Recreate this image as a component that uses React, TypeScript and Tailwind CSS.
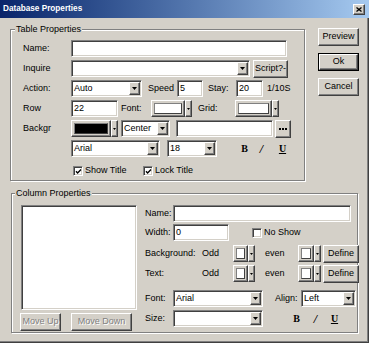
import React from 'react';

const SUNKEN =
  'border border-t-[#808080] border-l-[#808080] border-b-white border-r-white shadow-[inset_1px_1px_0_#404040,inset_-1px_-1px_0_#d4d0c8]';
const RAISED =
  'border border-t-white border-l-white border-b-[#404040] border-r-[#404040] shadow-[inset_-1px_-1px_0_#808080]';
const ETCHED = 'border border-[#808080] shadow-[inset_1px_1px_0_#fff,1px_1px_0_#fff]';

function Arrow() {
  return (
    <svg width="5" height="3" viewBox="0 0 5 3">
      <path d="M0 0h5L2.5 3z" fill="#000" />
    </svg>
  );
}

function Input({ w, value = '' }: { w: string; value?: string }) {
  return (
    <div className={`${w} h-[17px] shrink-0 bg-white ${SUNKEN} px-[2px] leading-[14px] whitespace-nowrap overflow-hidden`}>
      {value}
    </div>
  );
}

function Select({ w, value = '' }: { w: string; value?: string }) {
  return (
    <div className={`${w} h-[17px] shrink-0 bg-white ${SUNKEN} flex p-[1px]`}>
      <span className="flex-1 px-[1px] leading-[13px] whitespace-nowrap overflow-hidden">{value}</span>
      <span className={`w-[11px] bg-[#d4d0c8] ${RAISED} flex items-center justify-center`}>
        <Arrow />
      </span>
    </div>
  );
}

function ColorCombo({ w, color = 'bg-white' }: { w: string; color?: string }) {
  return (
    <div className={`${w} h-[17px] shrink-0 flex`}>
      <div className={`flex-1 ${RAISED} p-[2px]`}>
        <div className={`h-full ${color} border border-t-[#808080] border-l-[#808080] border-b-[#404040] border-r-[#404040]`} />
      </div>
      <div className={`w-[7px] ${RAISED} flex items-center justify-center`}>
        <svg width="3" height="2" viewBox="0 0 3 2">
          <path d="M0 0h3L1.5 2z" fill="#000" />
        </svg>
      </div>
    </div>
  );
}

function Btn({
  w,
  children,
  disabled = false,
  isDefault = false,
}: {
  w: string;
  children: React.ReactNode;
  disabled?: boolean;
  isDefault?: boolean;
}) {
  const inner = (
    <div
      className={`h-full ${RAISED} flex items-center justify-center whitespace-nowrap ${
        disabled ? 'text-[#808080] [text-shadow:1px_1px_0_#fff]' : ''
      }`}
    >
      {children}
    </div>
  );
  if (isDefault) {
    return <div className={`${w} h-[18px] shrink-0 border border-black`}>{inner}</div>;
  }
  return <div className={`${w} h-[18px] shrink-0`}>{inner}</div>;
}

function Check({ checked = false }: { checked?: boolean }) {
  return (
    <div className={`w-[10px] h-[10px] shrink-0 bg-white ${SUNKEN} flex items-center justify-center`}>
      {checked && (
        <svg width="7" height="7" viewBox="0 0 7 7">
          <path d="M1 3.2l1.6 1.7L6 1.5" fill="none" stroke="#000" strokeWidth="1.4" />
        </svg>
      )}
    </div>
  );
}

// bold / italic / underline toggles
function Biu({ gap1, gap2 }: { gap1: string; gap2: string }) {
  return (
    <>
      <span className="w-[9px] text-center font-['Liberation_Serif',serif] font-bold text-[10px]">B</span>
      <span className={`w-[9px] ${gap1} text-center font-['Liberation_Serif',serif] font-black italic text-[12px] leading-[10px]`}>/</span>
      <span className={`w-[9px] ${gap2} text-center font-['Liberation_Serif',serif] font-bold text-[10px] underline`}>U</span>
    </>
  );
}

export default function App() {
  return (
    <div className="w-[369px] h-[343px] overflow-hidden bg-[#d4d0c8] text-black text-[9px] font-['Liberation_Sans',Arial,sans-serif] shadow-[inset_-1px_-1px_0_#404040,inset_-2px_-2px_0_#808080]">
      {/* Title bar */}
      <div className="h-[18px] flex items-center justify-between pl-[3px] pr-[4px] bg-linear-to-r from-[#0a246a] to-[#a6caf0]">
        <span className="text-white font-bold text-[8.2px]">Database Properties</span>
        <div className={`w-[12px] h-[11px] bg-[#d4d0c8] ${RAISED} flex items-center justify-center`}>
          <svg width="6" height="5" viewBox="0 0 6 5">
            <path d="M0.5 0.5l5 4M5.5 0.5l-5 4" stroke="#000" strokeWidth="1.3" />
          </svg>
        </div>
      </div>

      <div className="flex">
        {/* Table Properties */}
        <div className={`relative ml-[10px] mt-[11px] w-[295px] h-[152px] ${ETCHED}`}>
          <span className="absolute -top-[7px] left-[4px] px-[1px] bg-[#d4d0c8] leading-[12px]">Table Properties</span>
          <div className="flex flex-col gap-[3px] pt-[10px] pl-[12px]">
            <div className="flex items-center h-[17px]">
              <span className="w-[48px]">Name:</span>
              <Input w="w-[216px]" />
            </div>
            <div className="flex items-center h-[17px]">
              <span className="w-[48px]">Inquire</span>
              <Select w="w-[179px]" />
              <div className="ml-[3px]">
                <Btn w="w-[35px]">Script?-</Btn>
              </div>
            </div>
            <div className="flex items-center h-[17px]">
              <span className="w-[48px]">Action:</span>
              <Select w="w-[71px]" value="Auto" />
              <span className="ml-[6px] w-[29px]">Speed</span>
              <Input w="w-[26px]" value="5" />
              <span className="ml-[5px] w-[28px]">Stay:</span>
              <Input w="w-[27px]" value="20" />
              <span className="ml-[4px]">1/10S</span>
            </div>
            <div className="flex items-center h-[17px]">
              <span className="w-[48px]">Row</span>
              <Input w="w-[47px]" value="22" />
              <span className="ml-[3px] w-[30px]">Font:</span>
              <ColorCombo w="w-[41px]" />
              <span className="ml-[6px] w-[37px]">Grid:</span>
              <ColorCombo w="w-[44px]" />
            </div>
            <div className="flex items-center h-[17px]">
              <span className="w-[48px] whitespace-nowrap">Backgr</span>
              <ColorCombo w="w-[47px]" color="bg-black" />
              <div className="ml-[3px]">
                <Select w="w-[49px]" value="Center" />
              </div>
              <div className="ml-[6px]">
                <Input w="w-[97px]" />
              </div>
              <div className={`ml-[2px] w-[16px] h-[18px] ${RAISED} flex items-center justify-center gap-[1px]`}>
                <span className="w-[2px] h-[2px] bg-black" />
                <span className="w-[2px] h-[2px] bg-black" />
                <span className="w-[2px] h-[2px] bg-black" />
              </div>
            </div>
            <div className="flex items-center h-[17px]">
              <span className="w-[48px]" />
              <Select w="w-[89px]" value="Arial" />
              <div className="ml-[7px]">
                <Select w="w-[50px]" value="18" />
              </div>
              <span className="ml-[23px] flex items-center">
                <Biu gap1="ml-[8px]" gap2="ml-[12px]" />
              </span>
            </div>
            <div className="flex items-center h-[10px] mt-[6px] pl-[50px]">
              <Check checked />
              <span className="ml-[2px] w-[58px]">Show Title</span>
              <Check checked />
              <span className="ml-[2px]">Lock Title</span>
            </div>
          </div>
        </div>

        {/* Dialog buttons */}
        <div className="ml-[13px] mt-[10px] flex flex-col gap-[7px]">
          <Btn w="w-[41px]">Preview</Btn>
          <Btn w="w-[41px]" isDefault>
            Ok
          </Btn>
          <Btn w="w-[41px]">Cancel</Btn>
        </div>
      </div>

      {/* Column Properties */}
      <div className={`relative ml-[11px] mt-[12px] w-[347px] h-[140px] ${ETCHED}`}>
        <span className="absolute -top-[7px] left-[3px] px-[1px] bg-[#d4d0c8] leading-[12px]">Column Properties</span>
        <div className="flex pt-[11px] pl-[8px]">
          <div className="flex flex-col">
            <div className={`ml-[1px] w-[116px] h-[105px] bg-white ${SUNKEN}`} />
            <div className="flex mt-[3px]">
              <Btn w="w-[41px]" disabled>
                Move Up
              </Btn>
              <div className="ml-[10px]">
                <Btn w="w-[61px]" disabled>
                  Move Down
                </Btn>
              </div>
            </div>
          </div>

          <div className="ml-[8px] flex flex-col">
            <div className="flex items-center h-[17px]">
              <span className="w-[28px]">Name:</span>
              <Input w="w-[178px]" />
            </div>
            <div className="flex items-center h-[17px] mt-[2px]">
              <span className="w-[28px]">Width:</span>
              <Input w="w-[56px]" value="0" />
              <span className="ml-[23px]">
                <Check />
              </span>
              <span className="ml-[2px]">No Show</span>
            </div>
            <div className="flex items-center h-[17px] mt-[4px]">
              <span className="w-[57px]">Background:</span>
              <span className="w-[31px]">Odd</span>
              <ColorCombo w="w-[22px]" />
              <span className="ml-[10px] w-[33px]">even</span>
              <ColorCombo w="w-[23px]" />
              <div className="ml-[2px]">
                <Btn w="w-[36px]">Define</Btn>
              </div>
            </div>
            <div className="flex items-center h-[17px] mt-[3px]">
              <span className="w-[57px]">Text:</span>
              <span className="w-[31px]">Odd</span>
              <ColorCombo w="w-[22px]" />
              <span className="ml-[10px] w-[33px]">even</span>
              <ColorCombo w="w-[23px]" />
              <div className="ml-[2px]">
                <Btn w="w-[36px]">Define</Btn>
              </div>
            </div>
            <div className="flex items-center h-[17px] mt-[8px]">
              <span className="w-[28px]">Font:</span>
              <Select w="w-[90px]" value="Arial" />
              <span className="ml-[12px] w-[26px]">Align:</span>
              <Select w="w-[55px]" value="Left" />
            </div>
            <div className="flex items-center h-[17px] mt-[3px]">
              <span className="w-[28px]">Size:</span>
              <Select w="w-[90px]" />
              <span className="ml-[29px] flex items-center">
                <Biu gap1="ml-[10px]" gap2="ml-[10px]" />
              </span>
            </div>
          </div>
        </div>
      </div>
    </div>
  );
}
